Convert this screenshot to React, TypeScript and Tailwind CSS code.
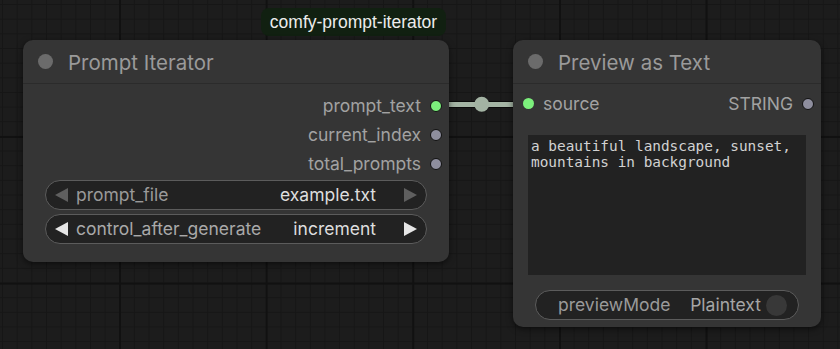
import React from "react";

const Dot = ({ color, ring = true, size = 12 }: { color: string; ring?: boolean; size?: number }) => (
  <span
    className={`inline-block shrink-0 rounded-full ${ring ? "border-[1.5px] border-[#111]" : ""}`}
    style={{ width: size, height: size, background: color }}
  />
);

const Arrow = ({ dir, color }: { dir: "left" | "right"; color: string }) => (
  <svg width="15" height="14" viewBox="0 0 15 14" className="shrink-0">
    {dir === "left" ? <polygon points="14,0 14,14 1,7" fill={color} /> : <polygon points="1,0 1,14 14,7" fill={color} />}
  </svg>
);

const NodeTitle = ({ title }: { title: string }) => (
  <div className="flex h-[44px] items-center gap-[15px] border-b border-[#2b2b2b] pl-[15px]">
    <span className="h-[15px] w-[15px] rounded-full bg-[#6b6b6b]" />
    <span className="pt-[3px] text-[20.5px] leading-none text-[#9a9a9a]">{title}</span>
  </div>
);

const ComboWidget = ({
  label,
  value,
  bright,
}: {
  label: string;
  value: string;
  bright?: boolean;
}) => (
  <div className="flex h-[30px] items-center rounded-full border border-[#5c5c5c] bg-[#222] pl-[8px] pr-[8px] text-[17.5px]">
    <Arrow dir="left" color={bright ? "#e6e6e6" : "#5f5f5f"} />
    <span className={`ml-[7px] ${bright ? "text-[#a9a9a9]" : "text-[#9a9a9a]"}`}>{label}</span>
    <span className="ml-auto mr-[27px] text-[#dedede]">{value}</span>
    <Arrow dir="right" color={bright ? "#e6e6e6" : "#5f5f5f"} />
  </div>
);

export default function App() {
  return (
    <div
      className="relative h-[349px] w-[840px] overflow-hidden bg-[#1c1c1c] bg-[linear-gradient(to_right,#111_2px,transparent_2px),linear-gradient(to_bottom,#111_2px,transparent_2px),linear-gradient(to_right,#161616_1px,transparent_1px),linear-gradient(to_bottom,#161616_1px,transparent_1px)] bg-size-[146.67px_146.67px,146.67px_146.67px,14.667px_14.667px,14.667px_14.667px] bg-position-[119px_0,0_136px,2px_0,0_4px]"
      style={{ fontFamily: "Inter, 'Noto Sans', sans-serif" }}
    >
      {/* link between the nodes */}
      <svg className="absolute left-0 top-0" width="840" height="349">
        <line x1="440" y1="104.5" x2="525" y2="104.5" stroke="#0b0b0b" strokeWidth="7" />
        <line x1="440" y1="104.5" x2="525" y2="104.5" stroke="#a5b5a5" strokeWidth="5" />
        <circle cx="481.7" cy="104.3" r="7.5" fill="#a3b3a3" />
      </svg>

      {/* badge */}
      <div
        className="absolute left-[261px] top-[8px] flex h-[28px] w-[185px] items-center justify-center rounded-[8px] bg-[#112011] text-[17.5px] text-[#ececec]"
        style={{ fontFamily: "'Liberation Sans', Arial, sans-serif" }}
      >
        comfy-prompt-iterator
      </div>

      {/* Prompt Iterator node */}
      <div className="absolute left-[23px] top-[40px] h-[222px] w-[426px] rounded-[10px] bg-[#353535] shadow-[0_2px_6px_rgba(0,0,0,0.55)]">
        <NodeTitle title="Prompt Iterator" />
        <div className="flex flex-col pt-[7px]">
          {[
            { name: "prompt_text", color: "#7cf07c" },
            { name: "current_index", color: "#8e8e9e" },
            { name: "total_prompts", color: "#8e8e9e" },
          ].map((o) => (
            <div key={o.name} className="flex h-[29px] items-center justify-end gap-[9px] pr-[7px] text-[17.5px] text-[#a2a2a2]">
              <span className="pt-[2px]">{o.name}</span>
              <Dot color={o.color} />
            </div>
          ))}
        </div>
        <div className="mt-[2px] flex flex-col gap-[4px] px-[22px]">
          <ComboWidget label="prompt_file" value="example.txt" />
          <ComboWidget label="control_after_generate" value="increment" bright />
        </div>
      </div>

      {/* Preview as Text node */}
      <div className="absolute left-[513px] top-[40px] h-[287px] w-[308px] rounded-[10px] bg-[#353535] shadow-[0_2px_6px_rgba(0,0,0,0.55)]">
        <NodeTitle title="Preview as Text" />
        <div className="mt-[5px] flex h-[29px] items-center pl-[10px] pr-[7px] text-[17.5px] text-[#a2a2a2]">
          <Dot color="#7cf07c" ring={false} size={11} />
          <span className="ml-[9px] pt-[2px]">source</span>
          <span className="ml-auto mr-[9px] pt-[2px]">STRING</span>
          <Dot color="#8e8e9e" />
        </div>
        <div className="mx-[15px] mt-[17px] h-[140px] bg-[#222] px-[3px] py-[3px]">
          <p
            className="text-[14.4px] leading-[16px] text-[#d2d2d2]"
            style={{ fontFamily: "'DejaVu Sans Mono', monospace" }}
          >
            a beautiful landscape, sunset,
            <br />
            mountains in background
          </p>
        </div>
        <div className="mx-[22px] mt-[15px] flex h-[30px] items-center rounded-full border border-[#5c5c5c] bg-[#222] pl-[22px] pr-[11px] text-[17.5px]">
          <span className="text-[#9a9a9a]">previewMode</span>
          <span className="ml-auto text-[#a6a6a6]">Plaintext</span>
          <span className="ml-[5px] h-[21px] w-[21px] rounded-full bg-[#383838]" />
        </div>
      </div>
    </div>
  );
}
